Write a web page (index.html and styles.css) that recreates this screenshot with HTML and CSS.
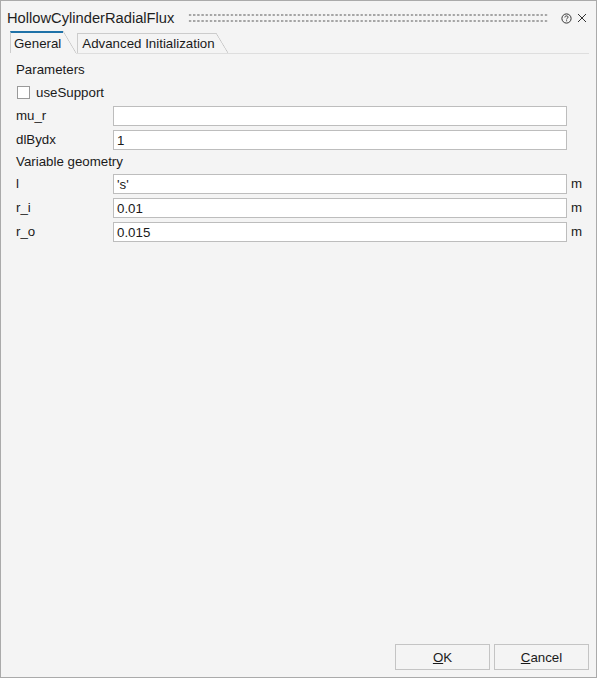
FILE: index.html
```html
<!DOCTYPE html>
<html>
<head>
<meta charset="utf-8">
<link rel="stylesheet" href="styles.css">
</head>
<body>
<div class="window">
  <div class="titlebar">
    <span class="title">HollowCylinderRadialFlux</span>
    <span class="grip"></span>
    <svg class="icon help" width="11" height="11" viewBox="0 0 11 11">
      <circle cx="5.5" cy="5.5" r="4.6" fill="none" stroke="#333" stroke-width="1"/>
      <path d="M3.9 4.4 C3.9 3.4 4.6 2.9 5.5 2.9 C6.4 2.9 7.1 3.4 7.1 4.2 C7.1 5.1 5.6 5.2 5.6 6.4" fill="none" stroke="#333" stroke-width="1"/>
      <rect x="5.1" y="7.3" width="1" height="1" fill="#333"/>
    </svg>
    <svg class="icon close" width="10" height="10" viewBox="0 0 10 10">
      <path d="M1 1 L9 9 M9 1 L1 9" stroke="#333" stroke-width="1"/>
    </svg>
  </div>
  <div class="tabstrip">
    <div class="tab active">General</div>
    <div class="tab">Advanced Initialization</div>
  </div>
  <div class="content">
    <div class="form">
      <div class="group">Parameters</div>
      <label class="check"><span class="box"></span>useSupport</label>
      <div class="label">mu_r</div><div class="field"><span class="input"></span></div><div class="unit"></div>
      <div class="label">dlBydx</div><div class="field"><span class="input">1</span></div><div class="unit"></div>
      <div class="group">Variable geometry</div>
      <div class="label">l</div><div class="field"><span class="input">'s'</span></div><div class="unit">m</div>
      <div class="label">r_i</div><div class="field"><span class="input">0.01</span></div><div class="unit">m</div>
      <div class="label">r_o</div><div class="field"><span class="input">0.015</span></div><div class="unit">m</div>
    </div>
  </div>
  <div class="footer">
    <button class="btn"><u>O</u>K</button>
    <button class="btn"><u>C</u>ancel</button>
  </div>
</div>
</body>
</html>
```
FILE: styles.css
```css
html, body {
  margin: 0;
  padding: 0;
}
body {
  width: 597px;
  height: 678px;
  font-family: "Liberation Sans", Arial, sans-serif;
  font-size: 13.3px;
  color: #1a1a1a;
}
.window {
  box-sizing: border-box;
  width: 597px;
  height: 678px;
  border: 1px solid #aaaaaa;
  background: #f4f4f4;
  display: flex;
  flex-direction: column;
}
.titlebar {
  height: 30px;
  display: flex;
  align-items: center;
  padding-left: 6px;
  padding-right: 9px;
}
.title {
  font-size: 14.7px;
  color: #1f1f1f;
  padding-top: 4px;
}
.grip {
  flex: 1;
  height: 12px;
  margin: 4px 12px 0 14px;
  background-image: radial-gradient(circle at 2px 3px, #a4a4a4 1px, transparent 1.3px);
  background-size: 4.2px 6px;
}
.icon {
  display: block;
  margin-top: 4px;
}
.help {
  margin-right: 5px;
}
.tabstrip {
  display: flex;
  align-items: flex-end;
  height: 22px;
  margin: 0 7px 0 9px;
  border-bottom: 1px solid #dedede;
}
.tab {
  position: relative;
  box-sizing: border-box;
  height: 20px;
  line-height: 22px;
  padding: 0 13px 0 5px;
  margin-left: 1px;
  color: #1a1a1a;
}
.tab::before {
  content: "";
  position: absolute;
  left: 0;
  top: 0;
  bottom: 0;
  right: 12px;
  border-left: 1px solid #cccccc;
  border-top: 1px solid #cccccc;
}
.tab::after {
  content: "";
  position: absolute;
  top: 0;
  bottom: 0;
  right: 0;
  width: 12px;
  background: linear-gradient(to top right, transparent calc(50% - 0.7px), #c6c6c6 50%, transparent calc(50% + 0.7px));
}
.tab.active {
  height: 23px;
  line-height: 26px;
  margin-left: 0;
  margin-bottom: -1px;
  padding: 0 15px 0 4px;
  background: #f4f4f4;
}
.tab.active::before {
  border-top: 2px solid #1f72a8;
  right: 13px;
  bottom: 1px;
}
.tab.active::after {
  width: 13px;
  bottom: 1px;
}
.content {
  padding: 6px 0 0 15px;
}
.form {
  display: grid;
  grid-template-columns: 97px 454px auto;
  align-items: center;
}
.group {
  grid-column: 1 / -1;
  height: 20px;
  line-height: 20px;
}
.check {
  grid-column: 1 / -1;
  display: flex;
  align-items: center;
  height: 24px;
}
.box {
  box-sizing: border-box;
  width: 13px;
  height: 13px;
  border: 1px solid #9a9a9a;
  background: #ffffff;
  margin: 0 6px 0 1px;
}
.label {
  height: 24px;
  line-height: 24px;
}
.field {
  height: 20px;
}
.input {
  display: block;
  box-sizing: border-box;
  height: 20px;
  border: 1px solid #bdbdbd;
  background: #ffffff;
  padding-left: 3px;
  line-height: 19px;
}
.unit {
  padding-left: 4px;
  line-height: 24px;
}
.footer {
  margin-top: auto;
  display: flex;
  justify-content: flex-end;
  gap: 4px;
  padding: 0 7px 7px 0;
}
.btn {
  box-sizing: border-box;
  width: 95px;
  height: 26px;
  border: 1px solid #c4c4c4;
  background: #f4f4f4;
  font-family: "Liberation Sans", Arial, sans-serif;
  font-size: 13.3px;
  color: #1a1a1a;
  padding: 0;
}
```
